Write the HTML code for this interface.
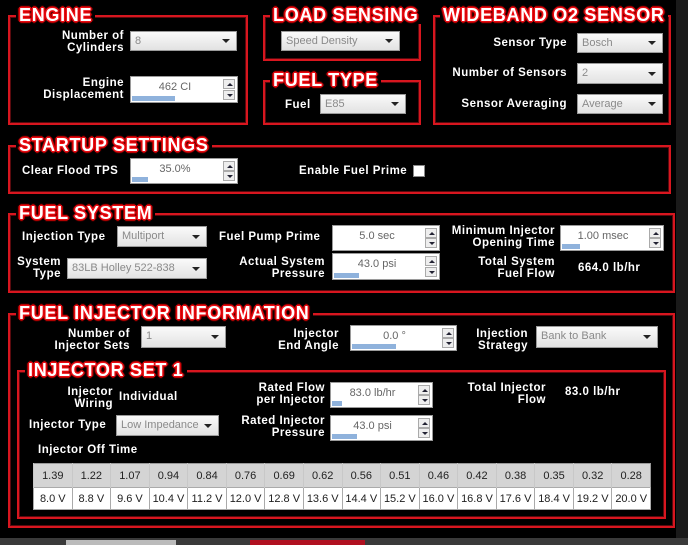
<!DOCTYPE html>
<html><head><meta charset="utf-8"><style>
*{margin:0;padding:0;box-sizing:border-box}
body{width:688px;height:545px;background:#000;position:relative;overflow:hidden;font-family:"Liberation Sans",Arial,sans-serif}
.box{position:absolute;border:2px solid #d8161f;box-shadow:inset 0 0 0 1px #5a0a0e}
.t{position:absolute;color:#fff;font-weight:900;font-size:18px;letter-spacing:0.7px;background:#000;padding:0 3px;line-height:18px;text-shadow:0 0 2px #f00,1px 1px 0 #e0101a,-1px -1px 0 #e0101a,1px -1px 0 #e0101a,-1px 1px 0 #e0101a,2px 0 1px #c00,-2px 0 1px #c00,0 2px 1px #c00,0 -2px 1px #c00;white-space:nowrap}
.l{position:absolute;color:#fff;font-weight:bold;font-size:11.5px;letter-spacing:0.5px;line-height:12px;white-space:nowrap}
.r{text-align:right}
.dd{position:absolute;background:linear-gradient(#fafafa,#e2e2e2);border:1px solid #9a9a9a;color:#8a8a8a;font-size:11px;line-height:18px;padding-left:4px;white-space:nowrap;overflow:hidden}
.dd:after{content:"";position:absolute;right:6px;top:50%;margin-top:-2px;border-left:4px solid transparent;border-right:4px solid transparent;border-top:4px solid #222}
.sp{position:absolute;background:#fff;border:1px solid #9a9a9a;color:#666;font-size:11px;text-align:center;line-height:16px}
.sp .v{position:absolute;left:0;right:18px;top:2px;text-align:center}
.sp .b{position:absolute;left:1px;bottom:1px;height:5px;background:#8fb2dc}
.sp .u,.sp .d{position:absolute;right:2px;width:12px;height:10px;border:1px solid #aaa;background:#eee}
.sp .u{top:2px}.sp .d{bottom:2px}
.sp .u:after{content:"";position:absolute;left:3px;top:3px;border-left:3px solid transparent;border-right:3px solid transparent;border-bottom:3px solid #223}
.sp .d:after{content:"";position:absolute;left:3px;top:3px;border-left:3px solid transparent;border-right:3px solid transparent;border-top:3px solid #223}
table{position:absolute;left:33px;top:463px;width:618px;border-collapse:collapse;font-size:11px;color:#222;background:#fff;border:1px solid #999}
td{text-align:center;border-left:1px solid #bbb;width:38.6px}
tr.h td{background:#d4d4d4;height:24px;border-left:1px solid #c8c8c8}
tr.w td{height:22px;border:1px solid #aaa;background:#fff}
</style></head><body>
<div style="position:absolute;left:676px;top:0;width:12px;height:545px;background:#1a1a1a"></div>
<div style="position:absolute;left:0;top:538px;width:688px;height:7px;background:#3a3a3a"></div>
<div style="position:absolute;left:66px;top:540px;width:110px;height:5px;background:#bbb"></div>
<div style="position:absolute;left:250px;top:540px;width:115px;height:5px;background:#b01020"></div>

<!-- ENGINE -->
<div class="box" style="left:8px;top:15px;width:240px;height:110px"></div>
<div class="t" style="left:16px;top:6px">ENGINE</div>
<div class="l r" style="left:10px;width:114px;top:30px">Number of<br>Cylinders</div>
<div class="dd" style="left:130px;top:31px;width:107px;height:20px">8</div>
<div class="l r" style="left:10px;width:114px;top:77px">Engine<br>Displacement</div>
<div class="sp" style="left:130px;top:76px;width:108px;height:27px"><div class="v">462 CI</div><div class="b" style="width:43px"></div><div class="u"></div><div class="d"></div></div>

<!-- LOAD -->
<div class="box" style="left:263px;top:15px;width:158px;height:46px"></div>
<div class="t" style="left:270px;top:6px">LOAD SENSING</div>
<div class="dd" style="left:281px;top:31px;width:119px;height:20px">Speed Density</div>
<!-- FUEL TYPE -->
<div class="box" style="left:263px;top:80px;width:158px;height:45px"></div>
<div class="t" style="left:270px;top:71px">FUEL TYPE</div>
<div class="l" style="left:285px;top:99px">Fuel</div>
<div class="dd" style="left:320px;top:94px;width:86px;height:20px">E85</div>

<!-- WIDEBAND -->
<div class="box" style="left:433px;top:15px;width:238px;height:110px"></div>
<div class="t" style="left:440px;top:6px">WIDEBAND O2 SENSOR</div>
<div class="l r" style="left:440px;width:127px;top:37px">Sensor Type</div>
<div class="dd" style="left:577px;top:33px;width:86px;height:20px">Bosch</div>
<div class="l r" style="left:440px;width:127px;top:67px">Number of Sensors</div>
<div class="dd" style="left:577px;top:63px;width:86px;height:21px">2</div>
<div class="l r" style="left:440px;width:127px;top:98px">Sensor Averaging</div>
<div class="dd" style="left:577px;top:94px;width:86px;height:20px">Average</div>

<!-- STARTUP -->
<div class="box" style="left:8px;top:145px;width:663px;height:49px"></div>
<div class="t" style="left:16px;top:136px">STARTUP SETTINGS</div>
<div class="l" style="left:22px;top:165px">Clear Flood TPS</div>
<div class="sp" style="left:130px;top:158px;width:108px;height:26px"><div class="v">35.0%</div><div class="b" style="width:16px"></div><div class="u"></div><div class="d"></div></div>
<div class="l" style="left:299px;top:165px">Enable Fuel Prime</div>
<div style="position:absolute;left:413px;top:165px;width:12px;height:12px;background:#fff;border:1px solid #888"></div>

<!-- FUEL SYSTEM -->
<div class="box" style="left:8px;top:213px;width:667px;height:80px"></div>
<div class="t" style="left:16px;top:204px">FUEL SYSTEM</div>
<div class="l" style="left:22px;top:231px">Injection Type</div>
<div class="dd" style="left:117px;top:226px;width:90px;height:21px">Multiport</div>
<div class="l r" style="left:10px;width:51px;top:256px">System<br>Type</div>
<div class="dd" style="left:67px;top:258px;width:140px;height:21px">83LB Holley 522-838</div>
<div class="l" style="left:219px;top:231px">Fuel Pump Prime</div>
<div class="sp" style="left:332px;top:225px;width:108px;height:26px"><div class="v">5.0 sec</div><div class="u"></div><div class="d"></div></div>
<div class="l r" style="left:210px;width:115px;top:256px">Actual System<br>Pressure</div>
<div class="sp" style="left:332px;top:253px;width:108px;height:27px"><div class="v">43.0 psi</div><div class="b" style="width:25px"></div><div class="u"></div><div class="d"></div></div>
<div class="l r" style="left:420px;width:135px;top:225px">Minimum Injector<br>Opening Time</div>
<div class="sp" style="left:560px;top:225px;width:104px;height:26px"><div class="v">1.00 msec</div><div class="b" style="width:18px"></div><div class="u"></div><div class="d"></div></div>
<div class="l r" style="left:420px;width:135px;top:256px">Total System<br>Fuel Flow</div>
<div class="l" style="left:578px;top:262px">664.0 lb/hr</div>

<!-- FUEL INJECTOR INFO -->
<div class="box" style="left:8px;top:313px;width:667px;height:215px"></div>
<div class="t" style="left:16px;top:304px">FUEL INJECTOR INFORMATION</div>
<div class="l r" style="left:20px;width:110px;top:328px">Number of<br>Injector Sets</div>
<div class="dd" style="left:141px;top:326px;width:85px;height:22px">1</div>
<div class="l r" style="left:240px;width:99px;top:328px">Injector<br>End Angle</div>
<div class="sp" style="left:350px;top:325px;width:107px;height:26px"><div class="v">0.0 °</div><div class="b" style="width:44px"></div><div class="u"></div><div class="d"></div></div>
<div class="l r" style="left:440px;width:88px;top:328px">Injection<br>Strategy</div>
<div class="dd" style="left:536px;top:326px;width:122px;height:22px">Bank to Bank</div>

<!-- INJECTOR SET 1 -->
<div class="box" style="left:17px;top:370px;width:649px;height:149px"></div>
<div class="t" style="left:25px;top:361px">INJECTOR SET 1</div>
<div class="l r" style="left:20px;width:93px;top:386px">Injector<br>Wiring</div>
<div class="l" style="left:119px;top:391px">Individual</div>
<div class="l" style="left:29px;top:419px">Injector Type</div>
<div class="dd" style="left:116px;top:415px;width:103px;height:21px">Low Impedance</div>
<div class="l r" style="left:210px;width:115px;top:382px">Rated Flow<br>per Injector</div>
<div class="sp" style="left:330px;top:382px;width:103px;height:26px"><div class="v">83.0 lb/hr</div><div class="b" style="width:10px"></div><div class="u"></div><div class="d"></div></div>
<div class="l r" style="left:210px;width:115px;top:415px">Rated Injector<br>Pressure</div>
<div class="sp" style="left:330px;top:415px;width:103px;height:26px"><div class="v">43.0 psi</div><div class="b" style="width:25px"></div><div class="u"></div><div class="d"></div></div>
<div class="l r" style="left:430px;width:116px;top:382px">Total Injector<br>Flow</div>
<div class="l" style="left:565px;top:386px">83.0 lb/hr</div>
<div class="l" style="left:38px;top:444px">Injector Off Time</div>
<table>
<tr class="h"><td>1.39</td><td>1.22</td><td>1.07</td><td>0.94</td><td>0.84</td><td>0.76</td><td>0.69</td><td>0.62</td><td>0.56</td><td>0.51</td><td>0.46</td><td>0.42</td><td>0.38</td><td>0.35</td><td>0.32</td><td>0.28</td></tr>
<tr class="w"><td>8.0 V</td><td>8.8 V</td><td>9.6 V</td><td>10.4 V</td><td>11.2 V</td><td>12.0 V</td><td>12.8 V</td><td>13.6 V</td><td>14.4 V</td><td>15.2 V</td><td>16.0 V</td><td>16.8 V</td><td>17.6 V</td><td>18.4 V</td><td>19.2 V</td><td>20.0 V</td></tr>
</table>
</body></html>
